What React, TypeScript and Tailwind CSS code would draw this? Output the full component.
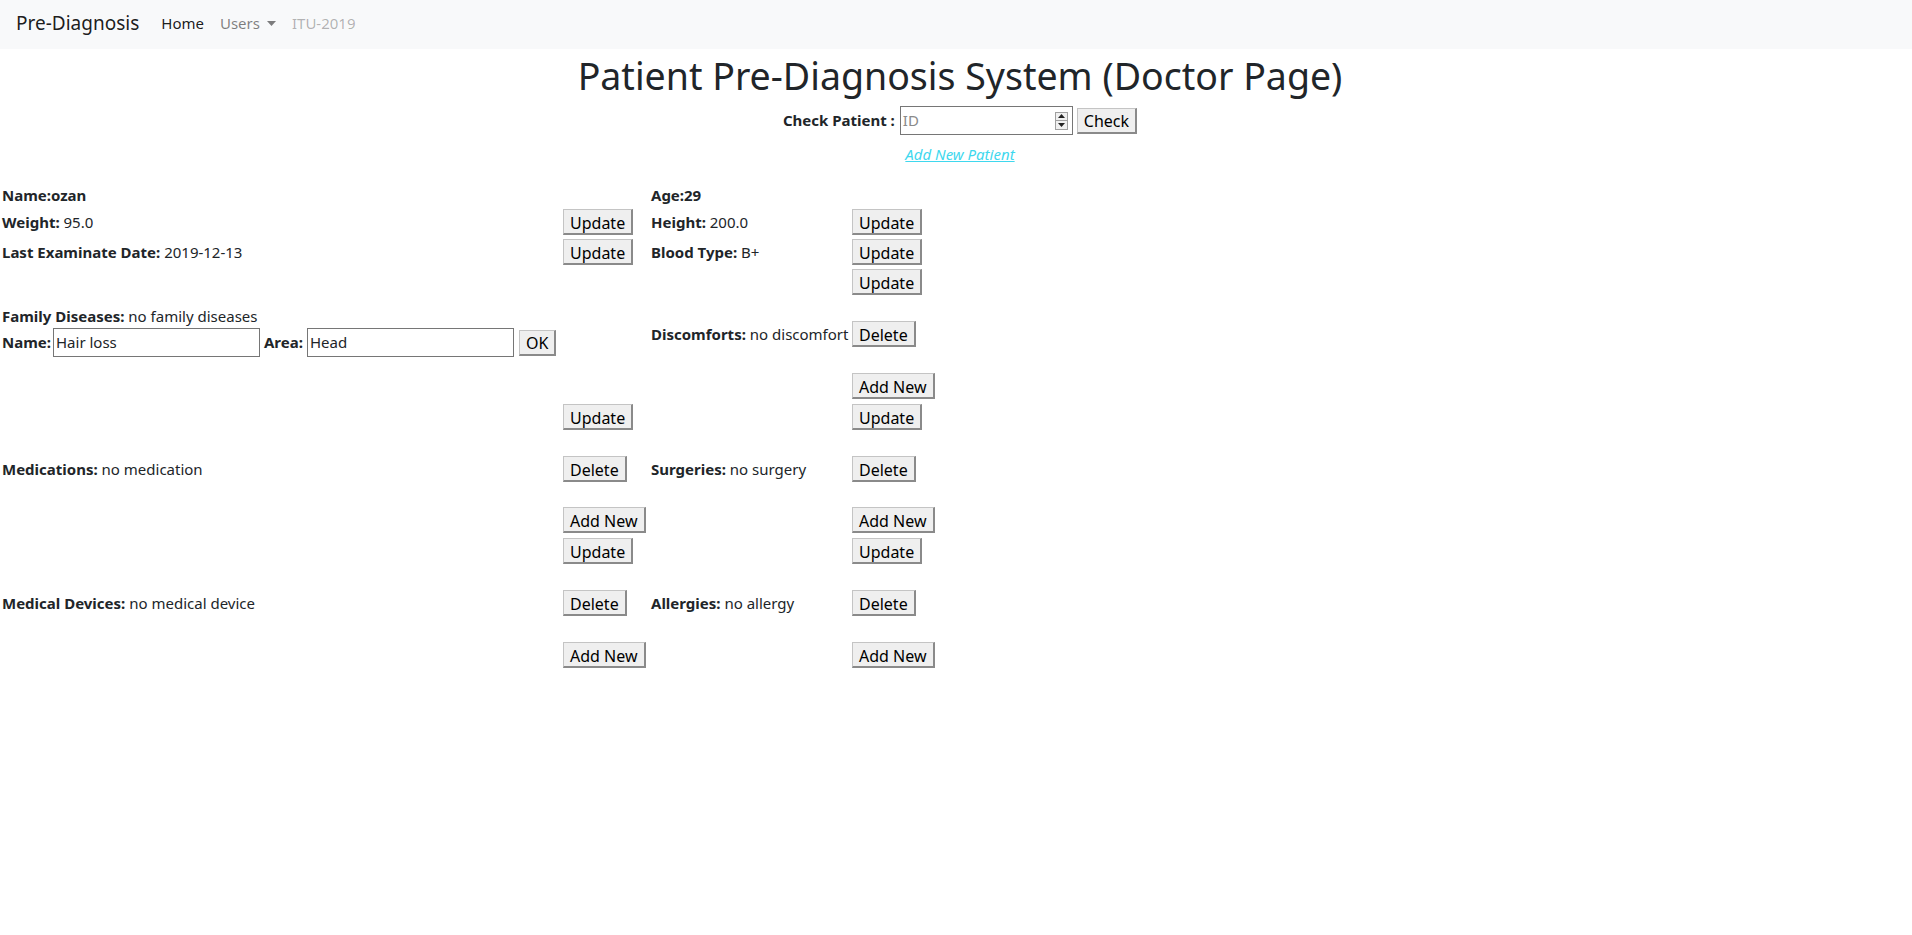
import React from "react";

const font = "font-['Noto_Sans',sans-serif]";

const Btn = ({ children }: { children: React.ReactNode }) => (
  <button className="h-[26px] px-[6px] pt-[2px] bg-[#efefef] border border-[#c4c4c4] border-b-2 border-r-2 border-b-[#8a8a8a] border-r-[#8a8a8a] text-[16px] leading-none text-black">
    {children}
  </button>
);

const Field = ({ label, value }: { label: string; value?: string }) => (
  <span className="text-[15px] text-[#212529] whitespace-nowrap">
    <b className="font-bold">{label}</b>
    {value !== undefined && <span> {value}</span>}
  </span>
);

type RowProps = {
  h: string;
  a?: React.ReactNode;
  b?: React.ReactNode;
  c?: React.ReactNode;
  d?: React.ReactNode;
  startA?: boolean;
};

const Row = ({ h, a, b, c, d, startA }: RowProps) => (
  <div className={`grid grid-cols-[561px_88px_201px_1fr] items-center ${h}`}>
    <div className={startA ? "self-start" : ""}>{a}</div>
    <div>{b}</div>
    <div>{c}</div>
    <div>{d}</div>
  </div>
);

const Spinner = () => (
  <div className="flex flex-col w-[13px] h-[18px] border border-[#a0a0a0] bg-[#f0f0f0]">
    <div className="flex-1 flex items-center justify-center border-b border-[#a0a0a0]">
      <svg width="7" height="4" viewBox="0 0 7 4">
        <path d="M0 4 L3.5 0 L7 4 Z" fill="#222" />
      </svg>
    </div>
    <div className="flex-1 flex items-center justify-center">
      <svg width="7" height="4" viewBox="0 0 7 4">
        <path d="M0 0 L3.5 4 L7 0 Z" fill="#222" />
      </svg>
    </div>
  </div>
);

export default function App() {
  return (
    <div className={`${font} min-h-[935px] bg-white text-[#212529]`}>
      {/* Navbar */}
      <nav className="h-[49px] bg-[#f8f9fa] flex items-center px-4 pb-[3px]">
        <span className="text-[19px] text-black/90 mr-[22px]">Pre-Diagnosis</span>
        <div className="flex items-center gap-[16px] text-[15px]">
          <span className="text-black/90">Home</span>
          <span className="text-black/50 flex items-center">
            Users
            <svg className="ml-[7px]" width="9" height="5" viewBox="0 0 9 5">
              <path d="M0 0 L9 0 L4.5 5 Z" fill="rgba(0,0,0,0.5)" />
            </svg>
          </span>
          <span className="text-black/30">ITU-2019</span>
        </div>
      </nav>

      {/* Header */}
      <div className="flex flex-col items-center pl-2">
        <h1 className="mt-[3px] text-[37.5px] leading-[48px] font-normal text-[#212529]">
          Patient Pre-Diagnosis System (Doctor Page)
        </h1>
        <div className="mt-[6px] flex items-center h-[29px] text-[15px]">
          <b className="font-bold mr-[5px]">Check Patient :</b>
          <div className="flex items-center w-[173px] h-[29px] border border-[#767676] pl-[2px] pr-[4px]">
            <span className="flex-1 text-[#8a8a8a]">ID</span>
            <Spinner />
          </div>
          <div className="ml-[4px]">
            <Btn>Check</Btn>
          </div>
        </div>
        <a className="mt-[7px] leading-[24px] italic underline text-[15px] text-[#3fd8ee]">
          Add New Patient
        </a>
      </div>

      {/* Patient details */}
      <div className="mt-[16px] pl-[2px]">
        <Row h="h-[25px]" a={<Field label="Name:ozan" />} c={<Field label="Age:29" />} />
        <Row
          h="h-[30px]"
          a={<Field label="Weight:" value="95.0" />}
          b={<Btn>Update</Btn>}
          c={<Field label="Height:" value="200.0" />}
          d={<Btn>Update</Btn>}
        />
        <Row
          h="h-[30px]"
          a={<Field label="Last Examinate Date:" value="2019-12-13" />}
          b={<Btn>Update</Btn>}
          c={<Field label="Blood Type:" value="B+" />}
          d={<Btn>Update</Btn>}
        />
        <Row h="h-[30px]" d={<Btn>Update</Btn>} />
        <div className="h-[7px]" />
        <Row
          h="h-[60px]"
          startA
          a={
            <div className="flex flex-col">
              <div className="h-[24px] flex items-center">
                <Field label="Family Diseases:" value="no family diseases" />
              </div>
              <div className="flex items-center h-[29px] text-[15px]">
                <b className="font-bold mr-[2px]">Name:</b>
                <div className="w-[207px] h-[29px] border border-[#767676] px-[2px] flex items-center">
                  Hair loss
                </div>
                <b className="font-bold ml-[4px] mr-[4px]">Area:</b>
                <div className="w-[207px] h-[29px] border border-[#767676] px-[2px] flex items-center">
                  Head
                </div>
                <div className="ml-[5px]">
                  <Btn>OK</Btn>
                </div>
              </div>
            </div>
          }
          c={<Field label="Discomforts:" value="no discomfort" />}
          d={<Btn>Delete</Btn>}
        />
        <div className="h-[7px]" />
        <Row h="h-[30px]" d={<Btn>Add New</Btn>} />
        <Row h="h-[32px]" b={<Btn>Update</Btn>} d={<Btn>Update</Btn>} />
        <Row
          h="h-[72px]"
          a={<Field label="Medications:" value="no medication" />}
          b={<Btn>Delete</Btn>}
          c={<Field label="Surgeries:" value="no surgery" />}
          d={<Btn>Delete</Btn>}
        />
        <Row h="h-[30px]" b={<Btn>Add New</Btn>} d={<Btn>Add New</Btn>} />
        <Row h="h-[32px]" b={<Btn>Update</Btn>} d={<Btn>Update</Btn>} />
        <Row
          h="h-[72px]"
          a={<Field label="Medical Devices:" value="no medical device" />}
          b={<Btn>Delete</Btn>}
          c={<Field label="Allergies:" value="no allergy" />}
          d={<Btn>Delete</Btn>}
        />
        <Row h="h-[32px]" b={<Btn>Add New</Btn>} d={<Btn>Add New</Btn>} />
      </div>
    </div>
  );
}
